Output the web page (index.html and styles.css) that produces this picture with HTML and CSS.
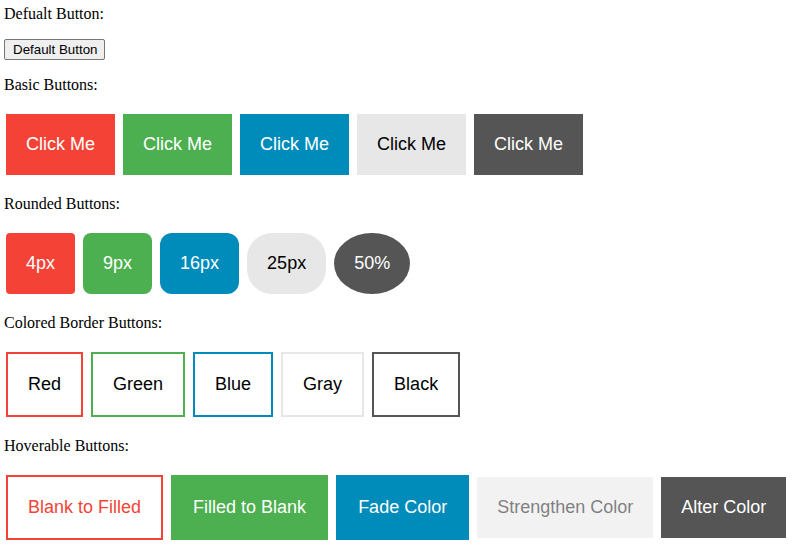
FILE: index.html
```html
<!DOCTYPE html>
<html>
<head>
<meta charset="utf-8">
<link rel="stylesheet" href="styles.css">
</head>
<body>
<div class="page">
  <p class="label first">Defualt Button:</p>
  <div class="default-row"><button class="default-btn">Default Button</button></div>

  <p class="label">Basic Buttons:</p>
  <div class="row">
    <button class="btn bg-red">Click Me</button>
    <button class="btn bg-green">Click Me</button>
    <button class="btn bg-blue">Click Me</button>
    <button class="btn bg-gray">Click Me</button>
    <button class="btn bg-black">Click Me</button>
  </div>

  <p class="label">Rounded Buttons:</p>
  <div class="row">
    <button class="btn bg-red r4">4px</button>
    <button class="btn bg-green r9">9px</button>
    <button class="btn bg-blue r16">16px</button>
    <button class="btn bg-gray r25">25px</button>
    <button class="btn bg-black r50">50%</button>
  </div>

  <p class="label">Colored Border Buttons:</p>
  <div class="row">
    <button class="btn outline b-red">Red</button>
    <button class="btn outline b-green">Green</button>
    <button class="btn outline b-blue">Blue</button>
    <button class="btn outline b-gray">Gray</button>
    <button class="btn outline b-black">Black</button>
  </div>

  <p class="label">Hoverable Buttons:</p>
  <div class="row">
    <button class="btn blank-red">Blank to Filled</button>
    <button class="btn bg-green bordered-green">Filled to Blank</button>
    <button class="btn bg-blue bordered-blue">Fade Color</button>
    <button class="btn bg-gray faded">Strengthen Color</button>
    <button class="btn bg-black">Alter Color</button>
  </div>
</div>
</body>
</html>
```

FILE: styles.css
```css
html, body {
  margin: 0;
  padding: 0;
  background: #ffffff;
}

.page {
  padding: 5px 4px 0 4px;
  font-family: "Liberation Serif", "Times New Roman", serif;
  font-size: 16px;
  color: #000000;
}

.label {
  margin: 16px 0;
  line-height: 18px;
}

.label.first {
  margin-top: 0;
}

.default-row {
  display: flex;
  height: 21px;
}

.default-btn {
  box-sizing: border-box;
  height: 21px;
  padding: 1px 7px 1px 8px;
  font-family: "Liberation Sans", Arial, sans-serif;
  font-size: 13.333px;
  color: #000000;
  background: #efefef;
  border: 1px solid #767676;
  border-radius: 2px;
}

.row {
  display: flex;
  align-items: center;
  gap: 8px;
  padding: 4px 2px;
}

.btn {
  box-sizing: content-box;
  border: none;
  margin: 0;
  padding: 20px 20px;
  font-family: "Liberation Sans", Arial, sans-serif;
  font-size: 18px;
  line-height: 21px;
  color: #ffffff;
  text-align: center;
  white-space: nowrap;
}

.bg-red { background: #f44336; }
.bg-green { background: #4caf50; }
.bg-blue { background: #008cba; }
.bg-gray { background: #e7e7e7; color: #000000; }
.bg-black { background: #555555; }

.r4 { border-radius: 4px; }
.r9 { border-radius: 8px; }
.r16 { border-radius: 12px; }
.r25 { border-radius: 25px; }
.r50 { border-radius: 50%; }

.outline {
  background: #ffffff;
  color: #000000;
  border: 2px solid;
}

.b-red { border-color: #f44336; }
.b-green { border-color: #4caf50; }
.b-blue { border-color: #008cba; }
.b-gray { border-color: #e7e7e7; }
.b-black { border-color: #555555; }

.blank-red {
  background: #ffffff;
  color: #f44336;
  border: 2px solid #f44336;
}

.bordered-green { border: 2px solid #4caf50; }
.bordered-blue { border: 2px solid #008cba; }

.faded {
  opacity: 0.5;
}
```
